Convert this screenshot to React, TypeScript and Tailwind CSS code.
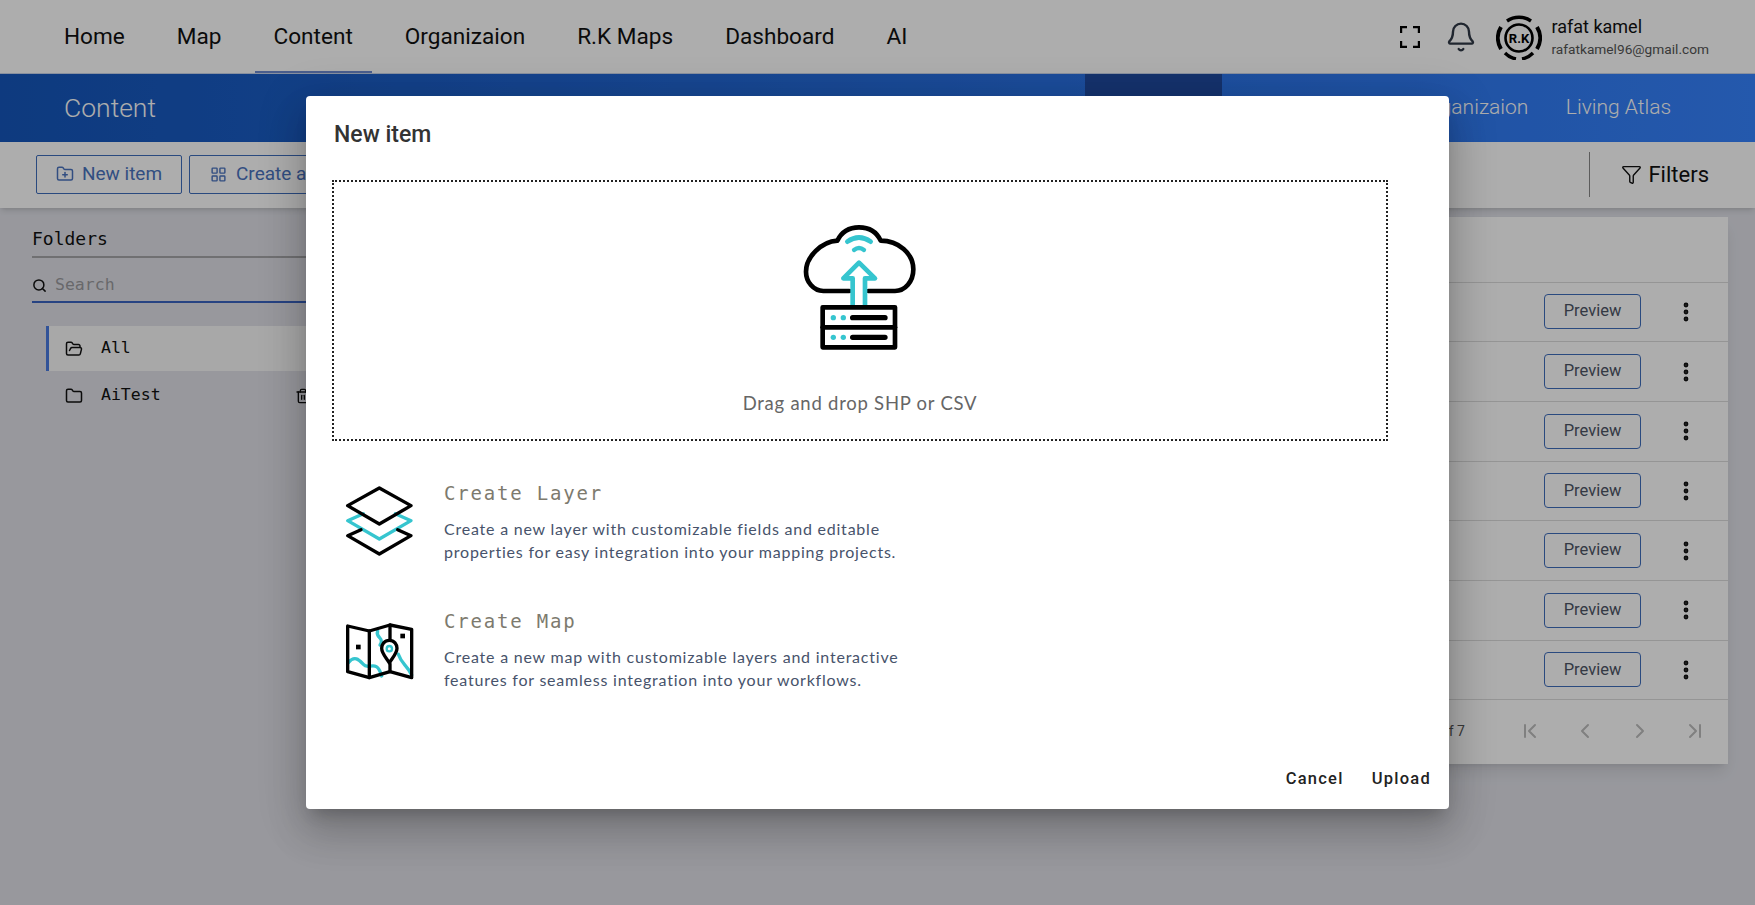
import { Bell, ChevronFirst, ChevronLast, ChevronLeft, ChevronRight, EllipsisVertical, Filter, Folder, FolderOpen, FolderPlus, LayoutGrid, Search, Trash2 } from 'lucide-react'

const navItems = ['Home', 'Map', 'Content', 'Organizaion', 'R.K Maps', 'Dashboard', 'AI']
const rows = [0, 1, 2, 3, 4, 5, 6]

function Avatar() {
  return (
    <svg width="46" height="46" viewBox="0 0 46 46" fill="none" stroke="#000">
      <circle cx="23" cy="24" r="13.5" strokeWidth="2.6" />
      <path d="M5 13 A21 21 0 0 0 5 35" strokeWidth="4" />
      <path d="M41 13 A21 21 0 0 1 41 35" strokeWidth="4" />
      <path d="M11 7 A21 21 0 0 1 35 7" strokeWidth="3.4" />
      <path d="M9 39 A21 21 0 0 0 20 45" strokeWidth="3.4" />
      <path d="M37 39 A21 21 0 0 1 26 45" strokeWidth="3.4" />
      <text x="23" y="29" textAnchor="middle" fontFamily="Roboto, sans-serif" fontWeight="700" fontSize="13" fill="#000" stroke="none">R.K</text>
    </svg>
  )
}

function CloudIcon() {
  return (
    <svg width="180" height="150" viewBox="30 0 540 450" fill="none" strokeLinejoin="round" strokeLinecap="round">
      <path d="M268 243H190C160 243 138 215 138 185C138 140 185 95 232 92C245 65 270 52 297 52C325 52 350 65 362 92C415 92 460 130 460 178C460 215 435 243 405 243H325" stroke="#000" strokeWidth="14" />
      <path d="M278 285V205H250L297 158L345 205H315V285" stroke="#36c5cf" strokeWidth="14" />
      <path d="M262 95Q297 70 332 95" stroke="#36c5cf" strokeWidth="14" />
      <path d="M282 120Q297 108 312 120" stroke="#36c5cf" strokeWidth="13" />
      <rect x="188" y="292" width="217" height="120" stroke="#000" strokeWidth="14" />
      <path d="M188 352H405" stroke="#000" strokeWidth="14" />
      <path d="M278 323H375M278 382H375" stroke="#000" strokeWidth="16" />
      <circle cx="220" cy="323" r="8" fill="#36c5cf" />
      <circle cx="250" cy="323" r="8" fill="#36c5cf" />
      <circle cx="220" cy="382" r="8" fill="#36c5cf" />
      <circle cx="250" cy="382" r="8" fill="#36c5cf" />
    </svg>
  )
}

function LayersIcon() {
  return (
    <svg width="90" height="85" viewBox="0 0 270 255" fill="none" strokeWidth="10" strokeLinejoin="round" strokeLinecap="round">
      <path d="M85 104L38 125L133 180L228 125L181 104" stroke="#36c5cf" />
      <path d="M78 152L38 170L133 225L228 170L188 152" stroke="#000" />
      <path d="M133 27L228 80L133 135L38 80Z" stroke="#000" />
    </svg>
  )
}

function MapIcon() {
  return (
    <svg width="90" height="85" viewBox="0 375 270 255" fill="none" strokeWidth="10" strokeLinejoin="round" strokeLinecap="round">
      <path d="M40 545C60 520 75 540 85 550C100 570 125 530 140 585" stroke="#36c5cf" />
      <path d="M128 450C120 470 150 470 135 492" stroke="#36c5cf" />
      <path d="M190 520C200 550 215 550 230 582" stroke="#36c5cf" />
      <path d="M38 435L103 450L165 432L230 445V590L165 572L103 590L38 572Z" stroke="#000" />
      <path d="M103 450V590M165 432V478M165 548V572" stroke="#000" />
      <path d="M163 478C148 478 140 490 140 502C140 518 155 532 163 546C171 532 186 518 186 502C186 490 178 478 163 478Z" stroke="#000" />
      <circle cx="163" cy="503" r="8" stroke="#36c5cf" strokeWidth="7" />
      <rect x="63" y="491" width="14" height="14" fill="#000" />
      <rect x="196" y="458" width="14" height="14" fill="#000" />
    </svg>
  )
}

export default function App() {
  return (
    <div className="relative h-[905px] overflow-hidden bg-[#e0e1e8] font-['Roboto',sans-serif]">
      <header className="flex h-[74px] items-center border-b border-[#c9d4ea] bg-white pl-[45px] pr-[46px]">
        <nav className="flex h-full gap-[14px]">
          {navItems.map(item => (
            <a key={item} className={`flex items-center border-b-2 px-[19px] pt-[2px] text-[22.6px] text-[#111] ${item === 'Content' ? 'border-[#6d8bd0]' : 'border-transparent'}`}>
              {item}
            </a>
          ))}
        </nav>
        <div className="ml-auto flex items-center">
          <svg width="20" height="22" viewBox="0 0 20 22" fill="none" stroke="#000" strokeWidth="2.4">
            <path d="M1 7V1H7M13 1H19V7M19 15V21H13M7 21H1V15" />
          </svg>
          <Bell size={32} strokeWidth={1.8} className="ml-[25px] text-[#303846]" />
          <div className="ml-[19px]"><Avatar /></div>
          <div className="ml-[9px]">
            <div className="text-[18px] leading-[24px] text-[#111]">rafat kamel</div>
            <div className="text-[13.7px] leading-[20px] text-[#555]">rafatkamel96@gmail.com</div>
          </div>
        </div>
      </header>

      <div className="flex h-[68px] items-center bg-gradient-to-r from-[#1556bb] to-[#3683ff] pl-[64px]">
        <span className="text-[26.5px] font-light text-white">Content</span>
        <div className="ml-auto flex h-full items-center pr-[64px]">
          <div className="h-full w-[137px] bg-[#1f4ba0]" />
          <div className="w-[179px]" />
          <span className="w-[145px] text-center text-[21px] font-light text-white">Organizaion</span>
          <span className="w-[145px] text-center text-[21px] font-light text-white">Living Atlas</span>
        </div>
      </div>

      <div className="flex h-[66px] items-center bg-white pb-[2px] pl-[36px] pr-[46px] shadow-md">
        <button className="flex h-[39px] w-[146px] items-center justify-center gap-[8px] rounded-[2px] border border-[#3f6dbc] text-[19px] text-[#4b74bf]">
          <FolderPlus size={18} /> New item
        </button>
        <button className="ml-[7px] flex h-[39px] w-[160px] items-center gap-[9px] rounded-[2px] border border-[#3f6dbc] pl-[20px] text-[19px] text-[#4b74bf]">
          <LayoutGrid size={17} /> Create a
        </button>
        <div className="ml-auto h-[45px] w-px bg-[#888]" />
        <div className="ml-[31px] flex items-center gap-[6px] text-[22px] text-[#111]">
          <Filter size={21} strokeWidth={1.6} /> Filters
        </div>
      </div>

      <div className="flex">
        <aside className="w-[340px] pl-[32px] pt-[18px] font-['DejaVu_Sans_Mono',monospace]">
          <div className="border-b-2 border-[#a6a6a8] pb-[4px] text-[18px] leading-[26px] text-[#111]">Folders</div>
          <div className="mt-[9px] flex h-[36px] items-center gap-[8px] border-b-2 border-[#3a63c0] pt-[2px] text-[16.5px] text-[#9a9a9e]">
            <Search size={15} strokeWidth={2.4} className="text-[#111]" /> Search
          </div>
          <div className="ml-[14px] mt-[23px] flex h-[45px] items-center gap-[18px] border-l-[3px] border-[#4a7be0] bg-[#f8f8f8] pl-[16px] text-[16.5px] text-[#111]">
            <FolderOpen size={18} /> All
          </div>
          <div className="ml-[17px] flex h-[49px] items-center gap-[18px] pl-[16px] text-[16.5px] text-[#111]">
            <Folder size={18} /> AiTest
            <Trash2 size={16} className="ml-auto mr-[29px]" />
          </div>
        </aside>

        <main className="mr-[27px] mt-[9px] h-[547px] flex-1 bg-white shadow-lg">
          <div className="h-[65.5px] border-b border-[#dcdcdc]" />
          {rows.map(row => (
            <div key={row} className="flex h-[59.7px] items-center justify-end gap-[33px] border-b border-[#dcdcdc] pr-[30px]">
              <button className="h-[35px] w-[97px] rounded-[4px] border border-[#3f6dbc] text-[16.5px] text-[#4d5566]">Preview</button>
              <EllipsisVertical size={24} strokeWidth={2.8} className="text-[#111]" />
            </div>
          ))}
          <div className="flex h-[62px] items-center justify-end pr-[21px] text-[#bdbdbd]">
            <span className="mr-[53px] text-[14px] text-[#555]">1 – 7 of 7</span>
            <div className="flex gap-[31px]">
              <ChevronFirst size={24} />
              <ChevronLeft size={24} />
              <ChevronRight size={24} />
              <ChevronLast size={24} />
            </div>
          </div>
        </main>
      </div>

      <div className="absolute inset-0 flex items-center justify-center bg-black/[0.32]">
        <div className="h-[713px] w-[1143px] rounded-[4px] bg-white px-[26px] shadow-[0_11px_15px_-7px_rgba(0,0,0,0.2),0_24px_38px_3px_rgba(0,0,0,0.14),0_9px_46px_8px_rgba(0,0,0,0.12)]">
          <h2 className="pl-[2px] pt-[24px] text-[23px] font-medium leading-[30px] text-[#333]">New item</h2>
          <div className="mt-[30px] flex h-[261px] w-[1056px] flex-col items-center border-2 border-dotted border-[#222] pt-[28px]">
            <CloudIcon />
            <p className="mt-[30px] font-['Lato',sans-serif] text-[18.5px] tracking-[0.75px] text-[#666]">Drag and drop SHP or CSV</p>
          </div>
          <div className="mt-[38px] flex gap-[19px] pl-[3px]">
            <LayersIcon />
            <div>
              <h3 className="font-['DejaVu_Sans_Mono',monospace] text-[19px] leading-[28px] tracking-[1.8px] text-[#7d7a6e]">Create Layer</h3>
              <p className="mt-[10px] font-['Lato',sans-serif] text-[16px] leading-[23px] tracking-[0.78px] text-[#47536b]">
                Create a new layer with customizable fields and editable<br />properties for easy integration into your mapping projects.
              </p>
            </div>
          </div>
          <div className="mt-[43px] flex gap-[19px] pl-[3px]">
            <div className="-mt-[1px]"><MapIcon /></div>
            <div>
              <h3 className="font-['DejaVu_Sans_Mono',monospace] text-[19px] leading-[28px] tracking-[1.8px] text-[#7d7a6e]">Create Map</h3>
              <p className="mt-[10px] font-['Lato',sans-serif] text-[16px] leading-[23px] tracking-[0.78px] text-[#47536b]">
                Create a new map with customizable layers and interactive<br />features for seamless integration into your workflows.
              </p>
            </div>
          </div>
          <div className="-mr-[8px] mt-[76px] flex justify-end gap-[28px] text-[16.5px] font-medium tracking-[1.25px] text-[#222]">
            <button>Cancel</button>
            <button>Upload</button>
          </div>
        </div>
      </div>
    </div>
  )
}
